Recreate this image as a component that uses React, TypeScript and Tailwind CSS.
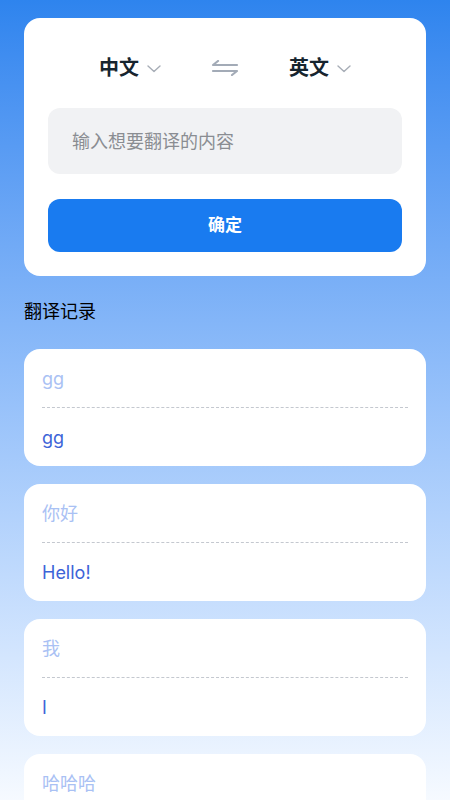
import { useState } from 'react';

const RECORDS = [
  { source: 'gg', target: 'gg' },
  { source: '你好', target: 'Hello!' },
  { source: '我', target: 'I' },
  { source: '哈哈哈', target: 'Hahaha' },
];

const FONT = "font-['Inter','Noto_Sans_CJK_SC',sans-serif]";

function Chevron() {
  return (
    <svg width="14" height="8" viewBox="0 0 14 8" fill="none" className="ml-2 mt-0.5">
      <path d="M1 1l6 5.5L13 1" stroke="#a7adb6" strokeWidth="1.4" strokeLinecap="round" strokeLinejoin="round" />
    </svg>
  );
}

function SwapIcon() {
  return (
    <svg width="28" height="16" viewBox="0 0 28 16" fill="none">
      {/* top arrow points left, bottom arrow points right */}
      <path d="M26 5H2l5-4" stroke="#a3abb7" strokeWidth="2.2" strokeLinecap="round" strokeLinejoin="round" />
      <path d="M2 11h24l-5 4" stroke="#a3abb7" strokeWidth="2.2" strokeLinecap="round" strokeLinejoin="round" />
    </svg>
  );
}

export default function App() {
  const [text, setText] = useState('');

  return (
    <div className={`h-[800px] overflow-hidden bg-gradient-to-b from-[#2e84ee] to-[#f6faff] px-6 pt-[18px] ${FONT}`}>
      {/* Translate card */}
      <div className="rounded-[16px] bg-white px-6 pt-[33px] pb-6">
        <div className="flex h-[34px] items-center justify-between pl-[51px] pr-[51px]">
          <div className="flex items-center">
            <span className="text-[20px] font-bold text-[#17252f]">中文</span>
            <Chevron />
          </div>
          <SwapIcon />
          <div className="flex items-center">
            <span className="text-[20px] font-bold text-[#17252f]">英文</span>
            <Chevron />
          </div>
        </div>
        <input
          value={text}
          onChange={(e) => setText(e.target.value)}
          placeholder="输入想要翻译的内容"
          className="mt-[23px] h-[66px] w-full rounded-[12px] bg-[#f1f2f4] px-6 text-[18px] text-[#333] outline-none placeholder:text-[#8a8d92]"
        />
        <button
          type="button"
          className="mt-[25px] flex h-[53px] w-full items-center justify-center rounded-[12px] bg-[#197bf0] text-[17px] font-bold text-white"
        >
          确定
        </button>
      </div>

      <h2 className="mt-[22px] text-[18px] leading-[28px] text-black">翻译记录</h2>

      {/* History */}
      <div className="mt-[23px] flex flex-col gap-[18px]">
        {RECORDS.map((r) => (
          <div key={r.source} className="rounded-[16px] bg-white px-[18px]">
            <div className="flex h-[58px] items-center text-[18px] text-[#a9c1f4]">{r.source}</div>
            <div className="border-t border-dashed border-[#c4c8cf]" />
            <div className="flex h-[58px] items-center text-[18px] text-[#3d64d8]">{r.target}</div>
          </div>
        ))}
      </div>
    </div>
  );
}
